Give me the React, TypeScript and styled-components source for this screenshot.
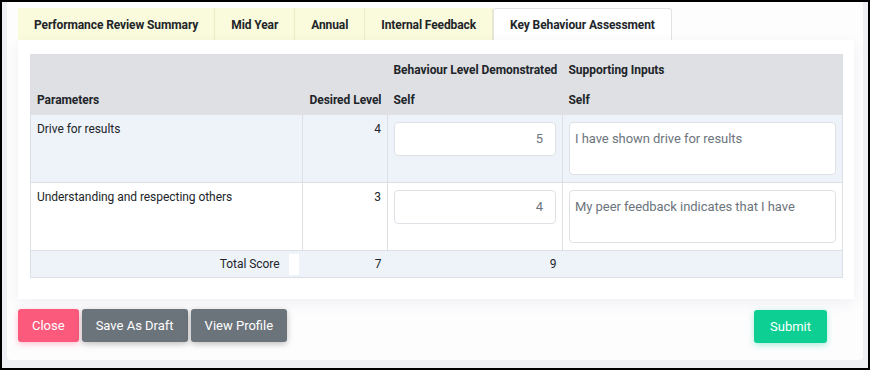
import React from "react";
import styled, { createGlobalStyle } from "styled-components";

const Global = createGlobalStyle`
  html, body { margin: 0; padding: 0; }
  body {
    font-family: Roboto, "Liberation Sans", Arial, sans-serif;
    background: #eff0f4;
    color: #212529;
  }
  * { box-sizing: border-box; }
`;

const Frame = styled.div`
  width: 870px;
  height: 370px;
  border: 2px solid #000;
  background: #eff0f4;
  padding: 0 6px 8px 5px;
  display: flex;
  overflow: hidden;
`;

const Card = styled.div`
  flex: 1;
  background: #fdfdfe;
  padding: 6px 9px 0 11px;
  display: flex;
  flex-direction: column;
  border-radius: 0 0 4px 4px;
  & > * { flex-shrink: 0; }
`;

const TabBar = styled.div`
  display: flex;
  height: 32px;
`;

const Tab = styled.div<{ $active?: boolean }>`
  padding: 0 16px;
  display: flex;
  align-items: center;
  font-size: 12px;
  font-weight: 700;
  letter-spacing: -0.1px;
  color: #212529;
  background: ${(p) => (p.$active ? "#ffffff" : "#fafadc")};
  border-right: 1px solid ${(p) => (p.$active ? "#e3e3e6" : "#ebebc6")};
  border-top: 1px solid ${(p) => (p.$active ? "#e3e3e6" : "transparent")};
  border-left: ${(p) => (p.$active ? "1px solid #e3e3e6" : "none")};
  border-radius: ${(p) => (p.$active ? "3px 3px 0 0" : "0")};
`;

const Panel = styled.div`
  background: #fff;
  padding: 14px 11px 21px 12px;
  box-shadow: 0 4px 14px rgba(30, 40, 60, 0.06);
`;

const Table = styled.table`
  width: 812px;
  border-collapse: collapse;
  border: 1px solid #dcdfe4;
  font-size: 12px;
  letter-spacing: -0.05px;
  table-layout: fixed;
`;

const HeadCell = styled.th<{ $align?: string }>`
  background: #dfe0e4;
  font-weight: 700;
  text-align: ${(p) => p.$align || "left"};
  padding: 0 6px;
  height: 30px;
  vertical-align: middle;
  white-space: nowrap;
`;

const Row = styled.tr<{ $tint?: boolean }>`
  background: ${(p) => (p.$tint ? "#eef2f9" : "#ffffff")};
`;

const Cell = styled.td<{ $align?: string }>`
  border: 1px solid #dcdfe4;
  border-top: none;
  padding: 7px 6px;
  vertical-align: top;
  text-align: ${(p) => p.$align || "left"};
  height: 66px;
  line-height: 15px;
`;

const NumberBox = styled.div`
  height: 34px;
  background: #fff;
  border: 1px solid #dee2e6;
  border-radius: 4px;
  display: flex;
  align-items: center;
  justify-content: flex-end;
  padding-right: 12px;
  font-size: 13px;
  color: #6c757d;
`;

const TextBox = styled.div`
  height: 53px;
  background: #fff;
  border: 1px solid #dee2e6;
  border-radius: 4px;
  padding: 7px 5px;
  font-size: 13px;
  line-height: 18px;
  color: #6c757d;
  text-align: left;
`;

const TotalRow = styled.tr`
  background: #eef2f9;
  border-top: 1px solid #dcdfe4;
`;

const TotalCell = styled.td<{ $align?: string }>`
  height: 27px;
  padding: 0 6px;
  text-align: ${(p) => p.$align || "left"};
  vertical-align: middle;
`;

const TotalLabel = styled.div`
  display: flex;
  justify-content: flex-end;
  align-items: center;
  gap: 9px;
  margin-right: -2px;
`;

const Blank = styled.span`
  display: inline-block;
  width: 10px;
  height: 21px;
  background: #fff;
  margin-top: 1px;
`;

const Actions = styled.div`
  display: flex;
  align-items: flex-start;
  margin-top: 10px;
  gap: 3px;
`;

const Btn = styled.button<{ $bg: string; $shadow: string }>`
  height: 33px;
  padding: 0 14px;
  border: none;
  border-radius: 3px;
  background: ${(p) => p.$bg};
  color: #fff;
  font-family: Roboto, "Liberation Sans", Arial, sans-serif;
  font-size: 13px;
  box-shadow: 0 2px 6px ${(p) => p.$shadow};
`;

const Spacer = styled.div`
  flex: 1;
`;

const SubmitBtn = styled(Btn)`
  margin-top: 1px;
  margin-right: 27px;
  padding: 0 16px;
`;

export default function App() {
  return (
    <>
      <Global />
      <Frame>
        <Card>
          <TabBar>
            <Tab>Performance Review Summary</Tab>
            <Tab>Mid Year</Tab>
            <Tab>Annual</Tab>
            <Tab>Internal Feedback</Tab>
            <Tab $active>Key Behaviour Assessment</Tab>
          </TabBar>
          <Panel>
            <Table>
              <colgroup>
                <col style={{ width: 272 }} />
                <col style={{ width: 85 }} />
                <col style={{ width: 175 }} />
                <col style={{ width: 280 }} />
              </colgroup>
              <thead>
                <tr>
                  <HeadCell />
                  <HeadCell />
                  <HeadCell>Behaviour Level Demonstrated</HeadCell>
                  <HeadCell>Supporting Inputs</HeadCell>
                </tr>
                <tr>
                  <HeadCell>Parameters</HeadCell>
                  <HeadCell $align="right">Desired Level</HeadCell>
                  <HeadCell>Self</HeadCell>
                  <HeadCell>Self</HeadCell>
                </tr>
              </thead>
              <tbody>
                <Row $tint>
                  <Cell>Drive for results</Cell>
                  <Cell $align="right">4</Cell>
                  <Cell>
                    <NumberBox>5</NumberBox>
                  </Cell>
                  <Cell>
                    <TextBox>I have shown drive for results</TextBox>
                  </Cell>
                </Row>
                <Row>
                  <Cell>Understanding and respecting others</Cell>
                  <Cell $align="right">3</Cell>
                  <Cell>
                    <NumberBox>4</NumberBox>
                  </Cell>
                  <Cell>
                    <TextBox>My peer feedback indicates that I have</TextBox>
                  </Cell>
                </Row>
                <TotalRow>
                  <TotalCell>
                    <TotalLabel>
                      Total Score
                      <Blank />
                    </TotalLabel>
                  </TotalCell>
                  <TotalCell $align="right">7</TotalCell>
                  <TotalCell $align="right">9</TotalCell>
                  <TotalCell />
                </TotalRow>
              </tbody>
            </Table>
          </Panel>
          <Actions>
            <Btn $bg="#fb5a7c" $shadow="rgba(251,90,124,0.35)">Close</Btn>
            <Btn $bg="#6b737b" $shadow="rgba(0,0,0,0.25)">Save As Draft</Btn>
            <Btn $bg="#6b737b" $shadow="rgba(0,0,0,0.25)">View Profile</Btn>
            <Spacer />
            <SubmitBtn $bg="#0dcf93" $shadow="rgba(13,207,147,0.35)">Submit</SubmitBtn>
          </Actions>
        </Card>
      </Frame>
    </>
  );
}
